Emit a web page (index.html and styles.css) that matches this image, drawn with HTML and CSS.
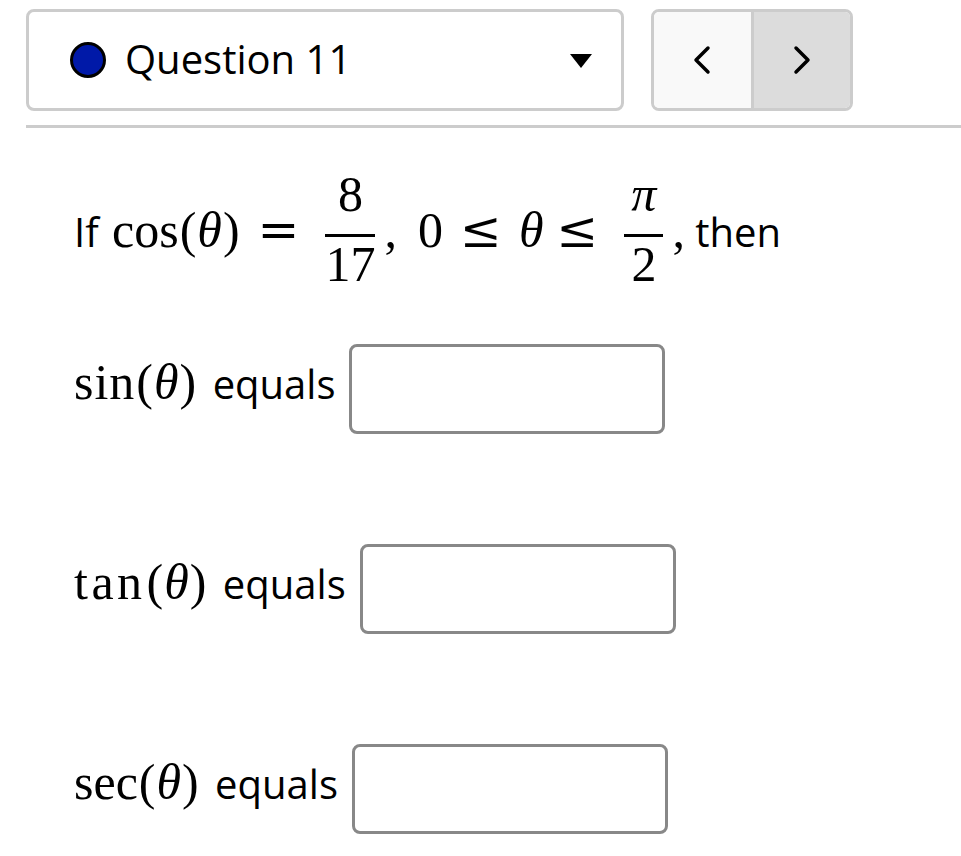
FILE: index.html
```html
<!DOCTYPE html>
<html>
<head>
<meta charset="utf-8">
<link rel="stylesheet" href="styles.css">
</head>
<body>
<div class="page">
  <header class="topbar">
    <div class="select">
      <span class="dot"></span>
      <span class="qlabel">Question 11</span>
      <svg class="caret" width="24" height="16" viewBox="0 0 24 16"><polygon points="1,1 23,1 12,15" fill="#000"/></svg>
    </div>
    <div class="nav">
      <button class="navbtn prev" aria-label="Previous">
        <svg width="20" height="30" viewBox="0 0 20 30"><polyline points="16,3 4,15 16,27" fill="none" stroke="#000" stroke-width="3.5" stroke-linecap="round" stroke-linejoin="round"/></svg>
      </button>
      <button class="navbtn next" aria-label="Next">
        <svg width="20" height="30" viewBox="0 0 20 30"><polyline points="4,3 16,15 4,27" fill="none" stroke="#000" stroke-width="3.5" stroke-linecap="round" stroke-linejoin="round"/></svg>
      </button>
    </div>
  </header>
  <div class="rule"></div>

  <main class="question">
    <p class="stem">If <span class="math"><span class="fn">cos</span><span class="par">(</span><i>θ</i><span class="par">)</span><span class="op">=</span><span class="frac"><span class="num">8</span><span class="den">17</span></span><span class="comma">,</span><span class="zero">0</span><span class="op">≤</span><i class="th">θ</i><span class="op">≤</span><span class="frac wide"><span class="num"><i>π</i></span><span class="den">2</span></span><span class="comma">,</span></span> then</p>

    <div class="answers">
      <div class="row"><span class="lbl"><span class="math"><span class="fn fn-sin">sin</span><span class="par">(</span><i>θ</i><span class="par">)</span></span> equals</span><input class="ans" type="text"></div>
      <div class="row"><span class="lbl"><span class="math"><span class="fn fn-tan">tan</span><span class="par">(</span><i>θ</i><span class="par">)</span></span> equals</span><input class="ans" type="text"></div>
      <div class="row"><span class="lbl"><span class="math"><span class="fn">sec</span><span class="par">(</span><i>θ</i><span class="par">)</span></span> equals</span><input class="ans" type="text"></div>
    </div>
  </main>
</div>
</body>
</html>
```

FILE: styles.css
```css
html, body {
  margin: 0;
  padding: 0;
  background: #fff;
}

body {
  font-family: "Open Sans", "DejaVu Sans", sans-serif;
  color: #000;
  overflow: hidden;
}

.page {
  padding: 9px 0 0 26px;
}

.topbar {
  display: flex;
  align-items: flex-start;
  gap: 27px;
}

.select {
  box-sizing: border-box;
  width: 598px;
  height: 102px;
  border: 3px solid #cccccc;
  border-radius: 8px;
  background: #fff;
  display: flex;
  align-items: center;
  padding: 0 28px 0 41px;
}

.dot {
  box-sizing: border-box;
  width: 36px;
  height: 36px;
  border-radius: 50%;
  background: #0019a8;
  border: 3.5px solid #000;
  flex: none;
}

.qlabel {
  font-size: 40px;
  margin-left: 19px;
  flex: 1;
  line-height: 1;
  position: relative;
  top: -1px;
}

.caret {
  flex: none;
  margin-top: 2px;
}

.nav {
  display: flex;
  box-sizing: border-box;
  height: 102px;
  width: 202px;
  border: 3px solid #cccccc;
  border-radius: 8px;
  overflow: hidden;
}

.navbtn {
  flex: 1;
  border: 0;
  margin: 0;
  padding: 0;
  display: flex;
  align-items: center;
  justify-content: center;
}

.prev {
  background: #f9f9f9;
  border-right: 3px solid #cccccc;
}

.next {
  background: #dcdcdc;
}

.rule {
  height: 3px;
  background: #cccccc;
  margin-top: 14px;
}

.question {
  padding: 0 0 0 48px;
}

.stem {
  font-size: 40px;
  margin: 41px 0 0 0;
  line-height: 1;
}

.stem > .math {
  margin-left: 3px;
}

.math {
  font-family: "Liberation Serif", "DejaVu Serif", serif;
  font-size: 50px;
}

.math i {
  font-style: italic;
}

.par {
  margin: 0 1px;
}

.op {
  font-family: "DejaVu Serif", serif;
  margin: 0 17px;
}

.th {
  margin-right: -4px;
}

.comma {
  margin-right: 21px;
}

.frac {
  display: inline-flex;
  flex-direction: column;
  align-items: center;
  vertical-align: 36px;
  margin: 0 9px;
}

.num {
  line-height: 50px;
  padding: 0 5px 15px;
  border-bottom: 3px solid #000;
  align-self: stretch;
  text-align: center;
}

.wide .num {
  padding-left: 7px;
  padding-right: 7px;
}

.den {
  line-height: 50px;
  padding-top: 2px;
}

.stem > .math > .comma:last-child {
  margin-right: 0;
}

.answers {
  display: flex;
  flex-direction: column;
  gap: 110px;
  margin-top: 55px;
}

.row {
  display: flex;
  align-items: center;
  white-space: nowrap;
}

.lbl {
  font-size: 40px;
  line-height: 1;
  padding-bottom: 14px;
}

.lbl > .math {
  margin-right: 5px;
}

.fn-sin {
  letter-spacing: 1px;
}

.fn-tan {
  letter-spacing: 3.5px;
}

.ans {
  box-sizing: border-box;
  width: 316px;
  height: 90px;
  border: 3px solid #888888;
  border-radius: 8px;
  background: #fff;
  font-size: 36px;
  padding: 0 12px;
  margin: 0 0 0 14px;
  outline: none;
}
```
